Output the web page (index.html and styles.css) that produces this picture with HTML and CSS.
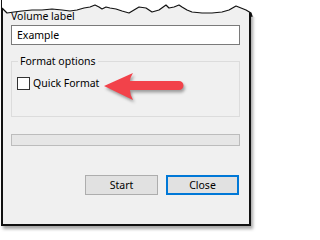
FILE: index.html
```html
<!DOCTYPE html>
<html>
<head>
<meta charset="utf-8">
<link rel="stylesheet" href="styles.css">
</head>
<body>
<div class="dialog">
  <svg class="torn" viewBox="0 0 257 17" width="257" height="17">
    <path class="torn-fill" d="M0,0 L257,0 L257,17 L252,17 L250,14 L249,13 L244,10 L239,8 L234,6 L227,10 L220,12 L210,13 L200,13 L190,12 L185,10 L180,7 L177,5 L172,7 L167,8 L164,5 L157,10 L150,12 L144,8 L137,7 L132,10 L127,13 L120,11 L114,9 L108,8 L104,7 L100,9 L97,7 L93,5 L88,7 L82,8 L75,10 L68,11 L60,10 L50,9 L40,10 L30,10 L20,11 L12,12 L5,13 L2,10 L0,8 Z"/>
    <polyline class="torn-line" points="0,8 2,10 5,13 12,12 20,11 30,10 40,10 50,9 60,10 68,11 75,10 82,8 88,7 93,5 97,7 100,9 104,7 108,8 114,9 120,11 127,13 132,10 137,7 144,8 150,12 157,10 164,5 167,8 172,7 177,5 180,7 185,10 190,12 200,13 210,13 220,12 227,10 234,6 239,8 244,10 249,13 250,17"/>
  </svg>

  <div class="label">Volume label</div>
  <div class="input">Example</div>

  <fieldset class="group">
    <legend>Format options</legend>
    <div class="check-row">
      <span class="checkbox"></span>
      <span class="check-label">Quick Format</span>
    </div>
  </fieldset>

  <div class="progress"></div>

  <div class="buttons">
    <div class="btn">Start</div>
    <div class="btn btn-default">Close</div>
  </div>

  <svg class="arrow" viewBox="98 68 88 38" width="88" height="38">
    <defs>
      <filter id="sh" x="-20%" y="-30%" width="140%" height="170%">
        <feGaussianBlur stdDeviation="1.6"/>
      </filter>
    </defs>
    <g transform="translate(1.5,2.5)" filter="url(#sh)" class="arrow-shadow">
      <path d="M102,86 L131,73 Q128,78 128,81 L177,81 A4.5,4.5 0 0 1 177,90 L128,90 Q128,95 131,100 Z"/>
    </g>
    <path class="arrow-body" d="M102,86 L131,73 Q128,78 128,81 L177,81 A4.5,4.5 0 0 1 177,90 L128,90 Q128,95 131,100 Z"/>
  </svg>
</div>
</body>
</html>
```

FILE: styles.css
```css
html, body {
  margin: 0;
  padding: 0;
  background: #ffffff;
}

body {
  width: 257px;
  height: 232px;
  overflow: hidden;
  font-family: "Noto Sans", "DejaVu Sans", sans-serif;
  font-size: 10.5px;
  color: #000;
}

.dialog {
  position: relative;
  box-sizing: border-box;
  width: 250px;
  height: 226px;
  margin-left: 1px;
  padding: 7px 9px 0 8px;
  background: #f0f0f0;
  border: 2px solid #111;
  border-top: none;
  box-shadow: 2px 3px 3px rgba(0, 0, 0, 0.35);
}

.torn {
  position: absolute;
  left: -1px;
  top: 0;
  display: block;
}

.torn-fill {
  fill: #ffffff;
}

.torn-line {
  fill: none;
  stroke: #111;
  stroke-width: 1.2;
  stroke-linejoin: round;
}

.label {
  height: 14px;
  line-height: 14px;
  padding-top: 2px;
}

.input {
  box-sizing: border-box;
  margin-top: 2px;
  height: 20px;
  line-height: 18px;
  border: 1px solid #7a7a7a;
  background: #fff;
  padding-left: 5px;
}

.group {
  margin: 10px 0 0 0;
  padding: 9px 5px 0 5px;
  height: 51px;
  border: 1px solid #dcdcdc;
  min-width: 0;
}

.group legend {
  padding: 0 2px;
  margin-left: 1px;
  line-height: 12px;
}

.check-row {
  display: flex;
  align-items: center;
  height: 14px;
}

.checkbox {
  box-sizing: border-box;
  width: 13px;
  height: 13px;
  border: 1px solid #333;
  background: #fff;
}

.check-label {
  margin-left: 3px;
  line-height: 14px;
}

.progress {
  box-sizing: border-box;
  margin-top: 17px;
  height: 12px;
  border: 1px solid #bcbcbc;
  background: #e6e6e6;
}

.buttons {
  display: flex;
  justify-content: flex-end;
  gap: 8px;
  margin-top: 29px;
  padding-right: 1px;
}

.btn {
  box-sizing: border-box;
  width: 73px;
  height: 20px;
  line-height: 18px;
  text-align: center;
  background: #e1e1e1;
  border: 1px solid #adadad;
}

.btn-default {
  border: 2px solid #0078d7;
  line-height: 16px;
}

.arrow {
  position: absolute;
  left: 97px;
  top: 68px;
  display: block;
}

.arrow-shadow {
  fill: rgba(0, 0, 0, 0.35);
}

.arrow-body {
  fill: #f2424a;
}
```
